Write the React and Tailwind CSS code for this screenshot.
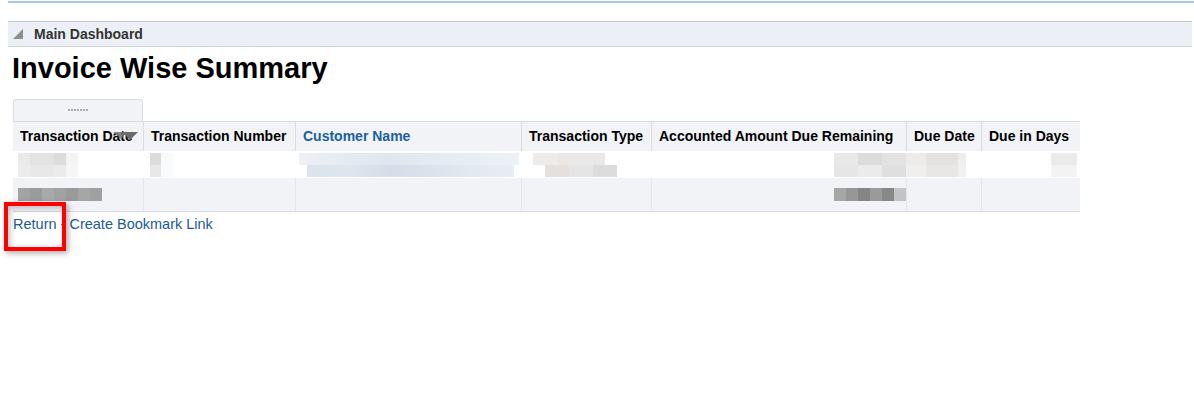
export default function App() {
  const cols = [
    { label: "Transaction Date", w: "w-[130px]" },
    { label: "Transaction Number", w: "w-[152px]" },
    { label: "Customer Name", w: "w-[226px]", link: true },
    { label: "Transaction Type", w: "w-[130px]" },
    { label: "Accounted Amount Due Remaining", w: "w-[255px]" },
    { label: "Due Date", w: "w-[75px]" },
    { label: "Due in Days", w: "w-[96px]" },
  ];

  return (
    <div className="w-[1194px] h-[397px] bg-white font-['Liberation_Sans',Arial,sans-serif] text-black overflow-hidden relative">
      {/* top rule */}
      <div className="ml-2 mt-px h-[2px] bg-[#a9c8e4]" />

      {/* breadcrumb bar */}
      <div className="ml-2 mr-[2px] mt-[18px] h-[26px] bg-[#ecf0f6] border-t border-b border-t-[#c3c6cb] border-b-[#d3d6db] flex items-center">
        <svg width="12" height="12" viewBox="0 0 12 12" className="ml-[4px]">
          <polygon points="11,1 11,11 1,11" fill="#8e8e8e" />
        </svg>
        <span className="ml-[10px] text-[14px] font-bold text-[#333]">Main Dashboard</span>
      </div>

      <h1 className="ml-3 mt-[3px] text-[29px] leading-[36px] font-bold">Invoice Wise Summary</h1>

      {/* table */}
      <div className="ml-[13px] mt-[13px]">
        <div className="w-[130px] h-[22px] bg-[#f1f3f7] border border-b-0 border-[#d9dde3] rounded-t-[3px] flex justify-center items-center">
          <svg width="20" height="3" viewBox="0 0 20 3">
            {[0, 3, 6, 9, 12, 15, 18].map((x) => (
              <rect key={x} x={x} y="0" width="2" height="2" fill="#a4aab2" />
            ))}
          </svg>
        </div>
        <div className="w-[1067px] border-b border-[#d6dae0]">
          <div className="flex h-[30px] bg-[#f1f3f7] border-t border-[#d9dde3]">
            {cols.map((c, i) => (
              <div
                key={c.label}
                className={`${c.w} shrink-0 relative flex items-center px-[7px] text-[14px] font-bold whitespace-nowrap ${i > 0 ? "border-l border-[#d9dde3]" : ""} ${c.link ? "text-[#1c5fa1]" : "text-black"}`}
              >
                {c.label}
                {i === 0 && (
                  <svg width="26" height="10" viewBox="0 0 26 10" className="absolute right-[4px] top-[9px]">
                    <polygon points="0,1 14,1 8,8" fill="#7a7a7a" opacity="0.85" />
                    <polygon points="9,1 25,1 17,9" fill="#6a6a6a" />
                  </svg>
                )}
              </div>
            ))}
          </div>

          {/* row 1 */}
          <div className="flex h-[27px] bg-white">
            <div className="w-[130px] shrink-0 flex items-center pl-[5px]">
              <div className="flex flex-col">
                <div className="flex h-3"><span className="w-3 bg-[#eaeaea]" /><span className="w-6 bg-[#e3e3e3]" /><span className="w-3 bg-[#dcdcdc]" /><span className="w-3 bg-[#f4f4f4]" /></div>
                <div className="flex h-3"><span className="w-3 bg-[#ececec]" /><span className="w-6 bg-[#e8e8e8]" /><span className="w-3 bg-[#ebebeb]" /><span className="w-3 bg-[#f6f6f6]" /></div>
              </div>
            </div>
            <div className="w-[152px] shrink-0 flex items-center pl-[7px]">
              <div className="flex flex-col">
                <span className="w-[11px] h-3 bg-[#dcdcdc]" />
                <span className="w-[11px] h-3 bg-[#e8e8e8]" />
              </div>
              <span className="w-3 h-6 bg-[#f8fafc]" />
            </div>
            <div className="w-[226px] shrink-0 flex items-center pl-[4px]">
              <div className="flex flex-col">
                <div className="h-3 w-[220px] bg-[linear-gradient(90deg,#eef1f6,#e6ebf2,#dfe6ef,#e4eaf1,#e9eef4,#eef2f6)]" />
                <div className="h-3 w-[207px] ml-[8px] bg-[linear-gradient(90deg,#dbe3ec,#dee5ee,#d5dde8,#dae2ec,#e3e9f0,#e8edf3)]" />
              </div>
            </div>
            <div className="w-[130px] shrink-0 flex items-center pl-[12px]">
              <div className="flex flex-col">
                <div className="flex h-3"><span className="w-6 bg-[#eeebe8]" /><span className="w-12 bg-[#e9e7e7]" /></div>
                <div className="flex h-3 ml-3"><span className="w-6 bg-[#e3e0de]" /><span className="w-6 bg-[#e6e5e5]" /><span className="w-6 bg-[#dcdcdc]" /></div>
              </div>
            </div>
            <div className="w-[255px] shrink-0 flex items-center justify-end">
              <div className="flex flex-col">
                <div className="flex h-3"><span className="w-6 bg-[#e8e8e8]" /><span className="w-6 bg-[#dcdcdc]" /><span className="w-6 bg-[#e2e2e2]" /></div>
                <div className="flex h-3"><span className="w-6 bg-[#e6e6e6]" /><span className="w-6 bg-[#ebebeb]" /><span className="w-6 bg-[#dfdfdf]" /></div>
              </div>
            </div>
            <div className="w-[75px] shrink-0 flex items-center">
              <div className="flex flex-col">
                <div className="flex h-3"><span className="w-5 bg-[#ecebea]" /><span className="w-8 bg-[#e3e2e1]" /><span className="w-2 bg-[#eeeeee]" /></div>
                <div className="flex h-3"><span className="w-5 bg-[#f0efee]" /><span className="w-8 bg-[#e8e7e6]" /><span className="w-2 bg-[#f0f0f0]" /></div>
              </div>
            </div>
            <div className="w-[96px] shrink-0 flex items-center justify-end">
              <div className="flex flex-col">
                <span className="w-[26px] h-3 bg-[#ebebeb]" />
                <span className="w-[26px] h-3 bg-[#f3f3f3]" />
              </div>
            </div>
          </div>

          {/* row 2 */}
          <div className="flex h-[33px] bg-[#f1f3f7]">
            <div className="w-[130px] shrink-0 flex items-center pl-[5px]">
              <div className="flex h-[13px]"><span className="w-3 bg-[#a3a3a3]" /><span className="w-3 bg-[#9b9b9b]" /><span className="w-3 bg-[#a7a9ac]" /><span className="w-3 bg-[#a2a2a2]" /><span className="w-3 bg-[#9a9a9a]" /><span className="w-3 bg-[#a6a6a6]" /><span className="w-3 bg-[#9fa0a2]" /></div>
            </div>
            <div className="w-[152px] shrink-0 border-l border-[#e3e6eb]" />
            <div className="w-[226px] shrink-0 border-l border-[#e3e6eb]" />
            <div className="w-[130px] shrink-0 border-l border-[#e3e6eb]" />
            <div className="w-[255px] shrink-0 border-l border-[#e3e6eb] flex items-center justify-end">
              <div className="flex h-[13px]"><span className="w-3 bg-[#a6a6a6]" /><span className="w-3 bg-[#979797]" /><span className="w-3 bg-[#858585]" /><span className="w-3 bg-[#9a9a9a]" /><span className="w-3 bg-[#888888]" /><span className="w-3 bg-[#c1c3c6]" /></div>
            </div>
            <div className="w-[75px] shrink-0 border-l border-[#e3e6eb]" />
            <div className="w-[96px] shrink-0 border-l border-[#e3e6eb]" />
          </div>
        </div>

        <div className="mt-[3px] text-[14.5px] leading-[18px] text-[#1c5a9a] whitespace-nowrap">
          <span>Return</span>
          <span className="text-[#555]"> - </span>
          <span>Create Bookmark Link</span>
        </div>
      </div>

      {/* highlight box */}
      <div className="absolute left-[4px] top-[202px] w-[62px] h-[49px] border-[4px] border-[#ff0000] shadow-[2px_2px_6px_rgba(0,0,0,0.35),inset_2px_2px_6px_rgba(0,0,0,0.25)]" />
    </div>
  );
}
